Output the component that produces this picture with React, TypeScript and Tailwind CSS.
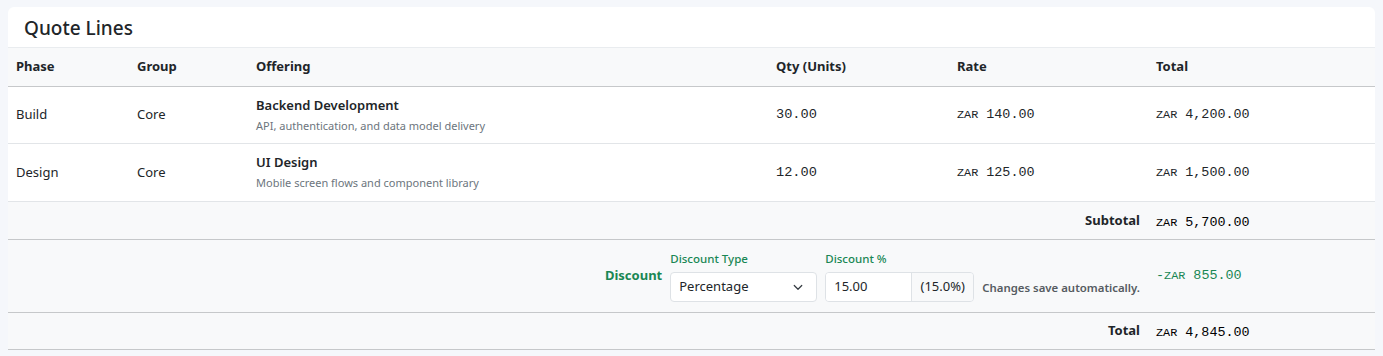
import React from "react";

const cols = "grid grid-cols-[121px_119px_520px_181px_199px_1fr]";

function Money({ v, className = "", neg = false }: { v: string; className?: string; neg?: boolean }) {
  return (
    <span className={`font-['Liberation_Mono',monospace] text-[13.4px] ${className}`}>
      {neg ? "-" : ""}
      <span className="text-[11.8px]">ZAR</span> {v}
    </span>
  );
}

const rows = [
  { phase: "Build", group: "Core", title: "Backend Development", desc: "API, authentication, and data model delivery", qty: "30.00", rate: "140.00", total: "4,200.00", h: "h-[57px]" },
  { phase: "Design", group: "Core", title: "UI Design", desc: "Mobile screen flows and component library", qty: "12.00", rate: "125.00", total: "1,500.00", h: "h-[58px]" },
];

export default function App() {
  return (
    <div className="min-h-[356px] bg-[#f5f7fb] pt-[7px] px-2 font-['Noto_Sans',sans-serif] text-[#212529]">
      <div className="bg-white rounded-t-[6px]">
        <div className="h-[41px] flex items-center px-4 pt-[3px] border-b border-[#e9ecef]">
          <h2 className="text-[19px] font-medium text-[#212529]">Quote Lines</h2>
        </div>
        <div className={`${cols} h-[39px] items-center bg-[#f8f9fa] border-b border-[#c6c8ca] text-[13px] font-bold`}>
          <div className="px-2">Phase</div>
          <div className="px-2">Group</div>
          <div className="px-2">Offering</div>
          <div className="px-2">Qty (Units)</div>
          <div className="px-2">Rate</div>
          <div className="px-2">Total</div>
        </div>
        {rows.map((r) => (
          <div key={r.title} className={`${cols} ${r.h} items-center border-b border-[#e2e5e8] text-[13px]`}>
            <div className="px-2">{r.phase}</div>
            <div className="px-2">{r.group}</div>
            <div className="px-2">
              <div className="font-semibold leading-[18px]">{r.title}</div>
              <div className="text-[11px] text-[#6c757d] leading-[18px] mt-[3px]">{r.desc}</div>
            </div>
            <div className="px-2">
              <span className="font-['Liberation_Mono',monospace] text-[13.6px]">{r.qty}</span>
            </div>
            <div className="px-2"><Money v={r.rate} /></div>
            <div className="px-2"><Money v={r.total} /></div>
          </div>
        ))}
        <div className={`${cols} h-[38px] items-center bg-[#f8f9fa] border-b border-[#c6c8ca]`}>
          <div className="col-span-5 px-2 text-right text-[13px] font-bold">Subtotal</div>
          <div className="px-2"><Money v="5,700.00" className="text-black" /></div>
        </div>
        <div className={`${cols} h-[73px] items-center bg-[#f8f9fa] border-b border-[#c6c8ca]`}>
          <div className="col-span-5 px-2 flex items-center justify-end">
            <div className="text-[13px] font-bold text-[#198754] mt-[-1px] mr-2">Discount</div>
            <div className="flex flex-col mr-2">
              <label className="text-[11.5px] font-medium text-[#198754] leading-[16px] mb-[5px]">Discount Type</label>
              <div className="w-[147px] h-[30px] bg-white border border-[#dee2e6] rounded-[4px] flex items-center justify-between pl-[8px] pr-[12px] text-[13px]">
                <span>Percentage</span>
                <svg width="12" height="12" viewBox="0 0 16 16" fill="none" stroke="#343a40" strokeWidth="1.6" strokeLinecap="round" strokeLinejoin="round">
                  <path d="M3 6l5 5 5-5" />
                </svg>
              </div>
            </div>
            <div className="flex flex-col mr-[8px]">
              <label className="text-[11.5px] font-medium text-[#198754] leading-[16px] mb-[5px]">Discount %</label>
              <div className="w-[149px] h-[30px] flex border border-[#dee2e6] rounded-[4px] overflow-hidden text-[13px]">
                <div className="w-[86px] bg-white flex items-center pl-[8px] border-r border-[#dee2e6]">15.00</div>
                <div className="flex-1 bg-[#f8f9fa] flex items-center justify-center">(15.0%)</div>
              </div>
            </div>
            <div className="self-end mb-[5px] text-[11.4px] font-semibold text-[#555b61]">Changes save automatically.</div>
          </div>
          <div className="px-2 mt-[-4px]"><Money neg v="855.00" className="text-[#198754]" /></div>
        </div>
        <div className={`${cols} h-[37px] items-center bg-[#f8f9fa] border-b border-[#c6c8ca]`}>
          <div className="col-span-5 px-2 text-right text-[13px] font-bold">Total</div>
          <div className="px-2"><Money v="4,845.00" className="text-black" /></div>
        </div>
      </div>
    </div>
  );
}
